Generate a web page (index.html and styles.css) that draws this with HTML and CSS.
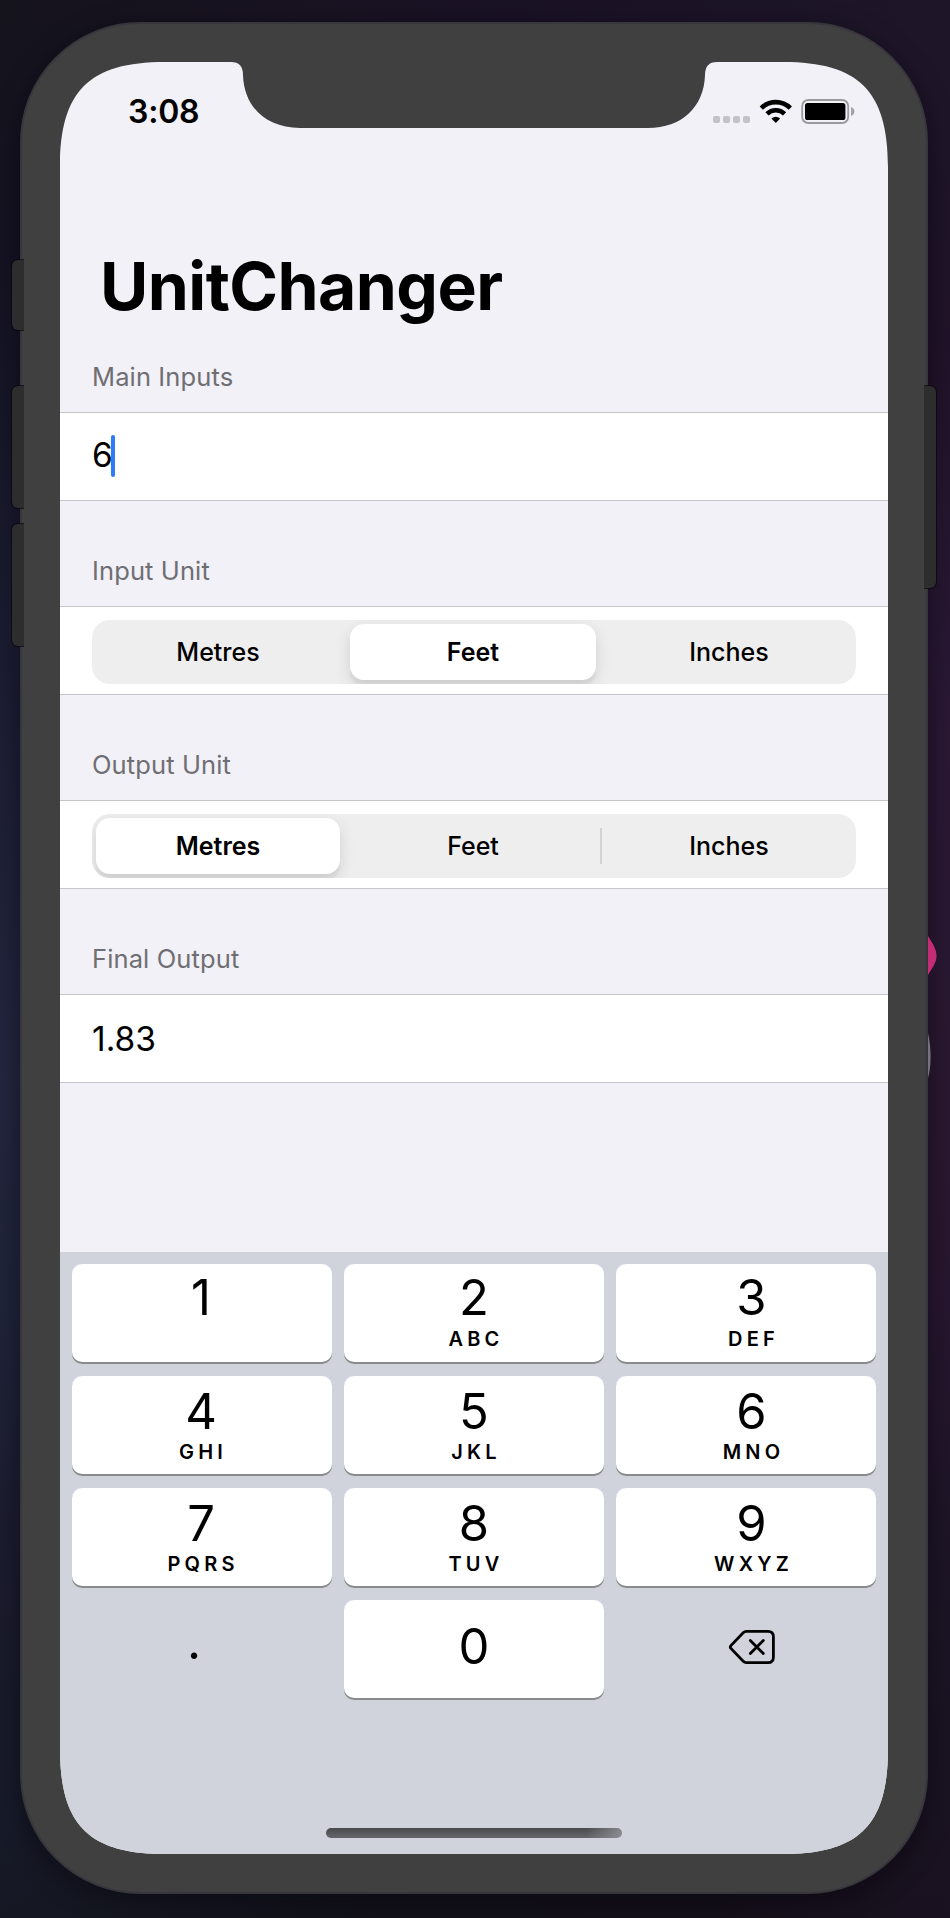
FILE: index.html
```html
<!DOCTYPE html>
<html lang="en">
<head>
<meta charset="utf-8">
<title>UnitChanger</title>
<link rel="stylesheet" href="styles.css">
</head>
<body>
<div class="phone">
  <span class="side-button mute"></span>
  <span class="side-button vol-up"></span>
  <span class="side-button vol-down"></span>
  <span class="side-button power"></span>
  <main class="screen">
    <header class="status">
      <span class="time">3:08</span>
      <svg class="status-icons" width="142" height="26" viewBox="0 0 142 26">
        <g fill="#c3c2c7">
          <rect x="0" y="17" width="7" height="7" rx="2"/>
          <rect x="10" y="17" width="7" height="7" rx="2"/>
          <rect x="20" y="17" width="7" height="7" rx="2"/>
          <rect x="30" y="17" width="7" height="7" rx="2"/>
        </g>
        <g fill="none" stroke="#000" stroke-width="4.6">
          <path d="M48.3 9.1 A20.5 20.5 0 0 1 77.3 9.1"/>
          <path d="M54 14.8 A12.6 12.6 0 0 1 71.6 14.8"/>
        </g>
        <path d="M62.8 24 L58.4 19.6 Q62.8 15.7 67.2 19.6Z"/>
        <rect x="89.2" y="1" width="46" height="23" rx="6" fill="none" stroke="#9b9a9e" stroke-width="1.8"/>
        <rect x="92" y="4" width="40.4" height="17" rx="2.6"/>
        <path d="M138 8 Q141.4 9.4 141.4 12.5 Q141.4 15.6 138 17Z" fill="#a3a2a6"/>
      </svg>
    </header>
    <h1 class="title">UnitChanger</h1>

    <section class="group">
      <h2 class="label">Main Inputs</h2>
      <div class="row field"><span class="entry">6</span><span class="caret"></span></div>
    </section>
    <section class="group">
      <h2 class="label">Input Unit</h2>
      <div class="row">
        <div class="segments">
          <span class="segment first">Metres</span>
          <span class="segment middle on">Feet</span>
          <span class="segment last">Inches</span>
        </div>
      </div>
    </section>
    <section class="group">
      <h2 class="label">Output Unit</h2>
      <div class="row">
        <div class="segments">
          <span class="segment first on">Metres</span>
          <span class="segment middle divided">Feet</span>
          <span class="segment last">Inches</span>
        </div>
      </div>
    </section>
    <section class="group">
      <h2 class="label">Final Output</h2>
      <div class="row result"><span>1.83</span></div>
    </section>

    <footer class="keyboard">
      <div class="keys">
        <div class="key left top"><span class="digit">1</span></div>
        <div class="key top"><span class="digit">2</span><span class="letters">ABC</span></div>
        <div class="key right top"><span class="digit">3</span><span class="letters">DEF</span></div>
        <div class="key left"><span class="digit">4</span><span class="letters">GHI</span></div>
        <div class="key"><span class="digit">5</span><span class="letters">JKL</span></div>
        <div class="key right"><span class="digit">6</span><span class="letters">MNO</span></div>
        <div class="key left"><span class="digit">7</span><span class="letters">PQRS</span></div>
        <div class="key"><span class="digit">8</span><span class="letters">TUV</span></div>
        <div class="key right"><span class="digit">9</span><span class="letters">WXYZ</span></div>
        <div class="key plain dot"><span class="digit">.</span></div>
        <div class="key zero"><span class="digit">0</span></div>
        <div class="key plain delete">
          <svg width="48" height="36" viewBox="0 0 48 36" fill="none" stroke="#000" stroke-width="2.8" stroke-linejoin="round" stroke-linecap="round">
            <path d="M18.5 2.4 H40 Q45.4 2.4 45.4 7.8 V28.2 Q45.4 33.6 40 33.6 H18.5 Q16.6 33.6 15.2 32.2 L2.9 19.4 Q1.7 18 2.9 16.6 L15.2 3.8 Q16.6 2.4 18.5 2.4"/>
            <path d="M22.3 11.4 L35.3 24.6 M35.3 11.4 L22.3 24.6"/>
          </svg>
        </div>
      </div>
      <div class="home-bar"></div>
    </footer>
  </main>
</div>
<svg class="wall-art" width="22" height="160" viewBox="0 0 22 160">
  <path d="M0 16 L5.5 25 Q8.6 31 8.6 36 Q8.6 41 5.5 46 L0 55Z" fill="#c42d75"/>
  <path d="M0 113 Q2.6 124 2.6 138 Q2.4 150 0 158Z" fill="#77727f"/>
</svg>
</body>
</html>
```

FILE: styles.css
```css
* { box-sizing: border-box; }

body {
  margin: 0;
  width: 950px;
  height: 1918px;
  padding: 22px 22px 24px 20px;
  position: relative;
  overflow: hidden;
  font-family: Inter, "Liberation Sans", sans-serif;
  color: #000;
  background:
    linear-gradient(to right, rgba(18, 17, 25, 0) 0%, #121119 40%, #141019 75%, rgba(20, 16, 25, 0) 100%) bottom / 100% 100px no-repeat,
    linear-gradient(to right, #15131c 0%, #1b1226 60%, #1e1628 100%) top / 100% 24px no-repeat,
    linear-gradient(#15131c 0%, #151323 15%, #1c1d33 36%, #23263f 56%, #202439 68%, #1b1c2f 80%, #171a28 95%, #151823 100%) left / 50% 100% no-repeat,
    linear-gradient(#1e1628 0%, #201329 18%, #2a1834 38%, #29182f 60%, #27162f 68%, #1d1526 80%, #1a1322 92%, #1a1120 100%) right / 50% 100% no-repeat;
}

.wall-art {
  position: absolute;
  left: 928px;
  top: 920px;
}

.phone {
  position: relative;
  width: 908px;
  height: 1872px;
  padding: 38px;
  border: 2px solid #38363d;
  border-radius: 120px;
  background: #404040;
  box-shadow: 0 6px 24px rgba(5, 3, 12, 0.5);
}

.side-button {
  position: absolute;
  width: 12px;
  background: #2d2d2d;
  box-shadow: 0 0 0 1px rgba(8, 6, 14, 0.7);
  left: -10px;
  border-radius: 6px 0 0 6px;
  clip-path: inset(-2px 0 -2px -2px);
}
.mute { top: 236px; height: 70px; }
.vol-up { top: 362px; height: 122px; }
.vol-down { top: 500px; height: 122px; }
.power {
  left: 902px;
  top: 362px;
  height: 202px;
  border-radius: 0 6px 6px 0;
  clip-path: inset(-2px -2px -2px 0);
}

.screen {
  display: flex;
  flex-direction: column;
  width: 828px;
  height: 1792px;
  background: #f2f1f7;
  clip-path: path("M0 105 C0 29 29 0 105 0 H171 Q183 0 183 13 C184 45 206 66 240 66 H588 C622 66 644 45 645 13 Q645 0 657 0 H723 C799 0 828 29 828 105 V1687 C828 1763 799 1792 723 1792 H105 C29 1792 0 1763 0 1687Z");
}

.status {
  display: flex;
  justify-content: space-between;
  height: 102px;
  padding: 30px 33px 0 68px;
}
.time {
  font-size: 32px;
  font-weight: 600;
  line-height: 40px;
  letter-spacing: -0.2px;
}
.status-icons { margin-top: 7px; }

.title {
  margin: 0;
  height: 164px;
  padding: 74px 0 0 40px;
  font-size: 66px;
  font-weight: 700;
  line-height: 90px;
  line-height: 96px;
  letter-spacing: -0.55px;
}

.group { height: 194px; }
.group .label {
  margin: 0;
  height: 105px;
  padding: 51px 0 0 32px;
  font-size: 25.5px;
  font-weight: 400;
  line-height: 38px;
  letter-spacing: 0.12px;
  color: #6f6e73;
}
.title + .group { height: 173px; }
.title + .group .label { height: 84px; padding-top: 30px; }

.row {
  height: 89px;
  padding: 13px 32px 0;
  border-top: 1px solid #c6c5c9;
  border-bottom: 1px solid #c6c5c9;
  background: #fff;
}
.field, .result {
  display: flex;
  font-size: 33.5px;
  line-height: 40px;
}
.field { padding-top: 22px; }
.result { padding-top: 24px; }
.entry { width: 19px; }
.caret {
  width: 4px;
  height: 42px;
  border-radius: 2px;
  background: #2f7cf6;
}

.segments {
  display: grid;
  grid-template-columns: 256px 250px 1fr;
  height: 64px;
  padding: 4px 0;
  border-radius: 18px;
  background: #eeeeee;
  overflow: hidden;
  font-size: 25px;
  font-weight: 500;
  line-height: 56px;
  text-align: center;
}
.segment { border-radius: 14px; }
.segment.on {
  background: #fff;
  font-weight: 600;
  box-shadow: 0 6px 16px rgba(0, 0, 0, 0.12), 0 6px 2px rgba(0, 0, 0, 0.04);
}
.first { margin-right: 4px; }
.first.on { margin: 0 8px 0 4px; }
.middle { margin: 0 2px; }
.last { padding-left: 4px; }
.divided {
  margin: 0 -4px 0 0;
  padding-right: 4px;
  border-radius: 0;
  background: linear-gradient(#d3d3d5, #d3d3d5) 100% 50% / 2px 36px no-repeat;
}

.keyboard {
  display: flex;
  flex-direction: column;
  align-items: center;
  justify-content: space-between;
  height: 602px;
  margin-top: auto;
  padding: 12px 12px 16px;
  background: #d0d3db;
}
.keys {
  display: grid;
  grid-template-columns: repeat(3, 260px);
  grid-auto-rows: 98px;
  gap: 14px 12px;
}
.key {
  display: flex;
  flex-direction: column;
  align-items: center;
  padding-top: 7px;
  border-radius: 10px;
  background: #fff;
  box-shadow: 0 2px 0 #898a8e;
}
.key.top { padding-top: 5px; }
.key.left { padding-right: 2px; }
.key.right { padding-left: 11px; }
.key.zero { padding-top: 18px; }
.key.plain {
  background: none;
  box-shadow: none;
}
.key.dot { padding: 13px 16px 0 0; }
.key.delete { padding: 29px 0 0 11px; }
.digit {
  font-size: 49px;
  line-height: 58px;
}
.letters {
  font-size: 20px;
  font-weight: 600;
  line-height: 24px;
  letter-spacing: 4.2px;
  margin: -1px -4px 0 0;
}
.top .letters { margin-top: 0; }

.home-bar {
  width: 296px;
  height: 10px;
  border-radius: 5px;
  background:
    linear-gradient(to right, transparent 88%, rgba(150, 151, 156, 0.8) 100%),
    linear-gradient(#494a4d, #66676b);
}
```
